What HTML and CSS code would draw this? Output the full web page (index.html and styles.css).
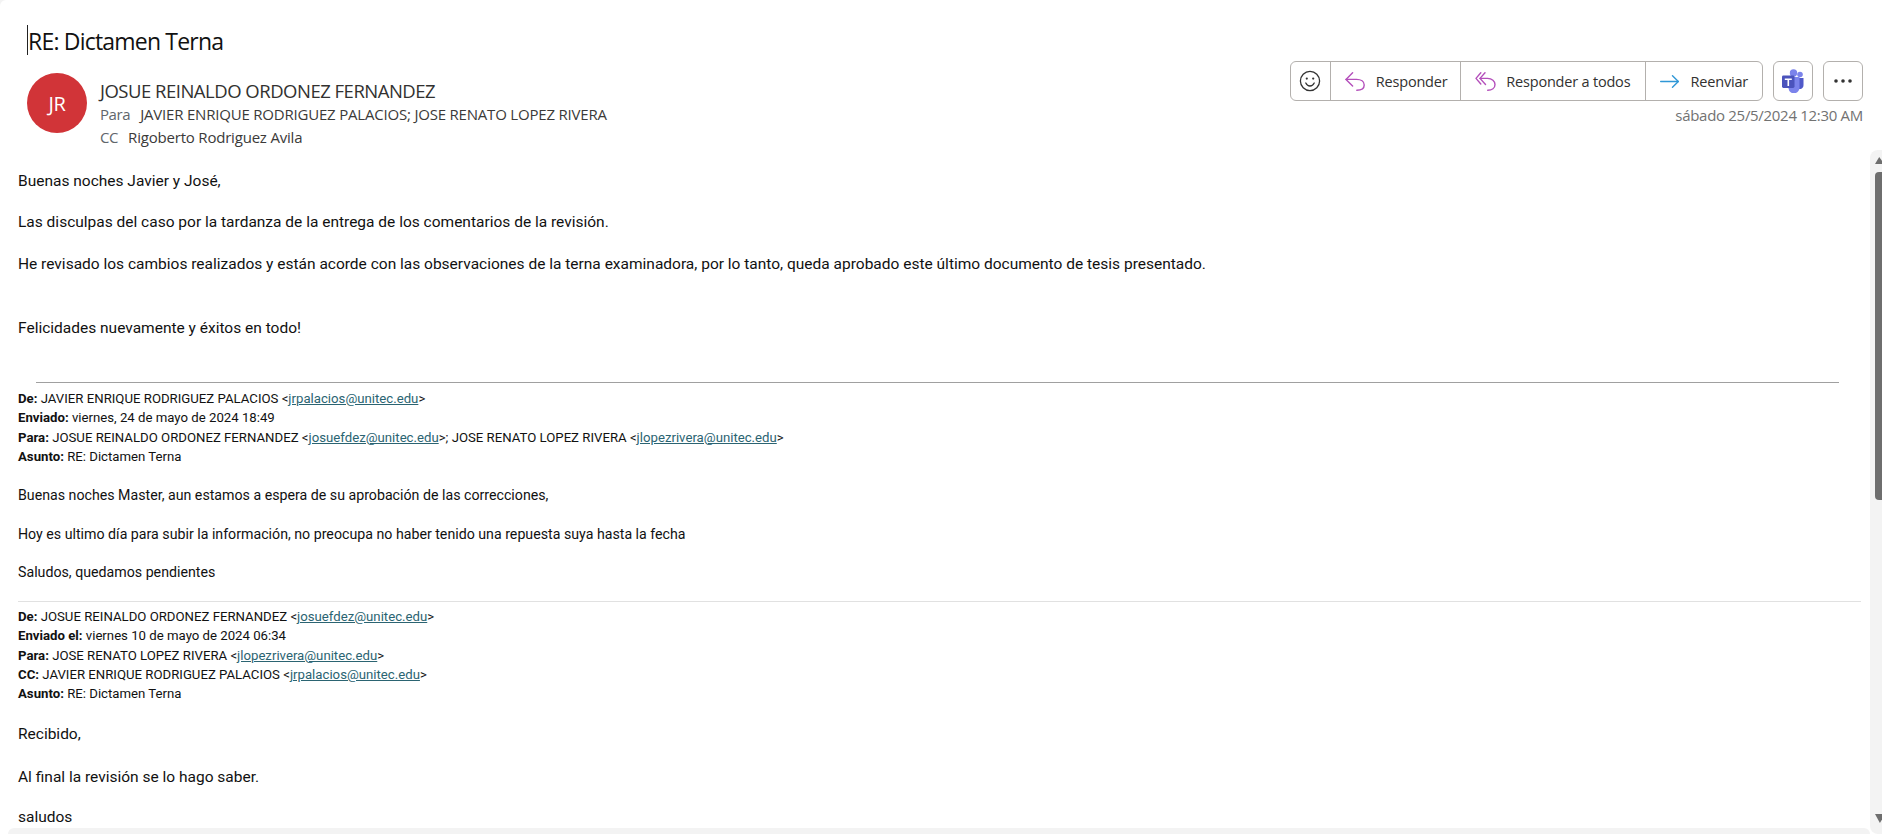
FILE: index.html
```html
<!DOCTYPE html>
<html lang="es">
<head>
<meta charset="utf-8">
<title>RE: Dictamen Terna</title>
<link rel="stylesheet" href="styles.css">
</head>
<body>
<div class="app">
  <header class="head">
    <h1 class="subject"><span class="caret"></span>RE: Dictamen Terna</h1>
    <div class="meta">
      <div class="people">
        <div class="avatar">JR</div>
        <div class="who">
          <div class="sender">JOSUE REINALDO ORDONEZ FERNANDEZ</div>
          <div class="rcpt"><span class="lbl lbl-para">Para</span>JAVIER ENRIQUE RODRIGUEZ PALACIOS; JOSE RENATO LOPEZ RIVERA</div>
          <div class="rcpt"><span class="lbl lbl-cc">CC</span>Rigoberto Rodriguez Avila</div>
        </div>
      </div>
      <div class="actions">
        <div class="btnrow">
          <div class="group">
            <button class="act act-emoji"><svg width="22" height="22" viewBox="0 0 22 22" fill="none" stroke="#333" stroke-width="1.3"><circle cx="11" cy="11" r="9.6"/><path d="M6.8 13c1 2 2.5 3 4.2 3s3.2-1 4.2-3" stroke-linecap="round"/><circle cx="7.8" cy="8.6" r="1.1" fill="#333" stroke="none"/><circle cx="14.2" cy="8.6" r="1.1" fill="#333" stroke="none"/></svg></button>
            <button class="act act-reply"><svg width="20" height="19" viewBox="0 0 20 19" fill="none" stroke="#b44fbb" stroke-width="1.4" stroke-linecap="round" stroke-linejoin="round"><path d="M7.6.8 1 7.4l6.600 6.600"/><path d="M1 7.400h10.500c4.500 0 7.700 2.200 7.700 5.600s-3.200 5.200-7.400 5.200"/></svg><span>Responder</span></button>
            <button class="act act-all"><svg width="21" height="19" viewBox="0 0 21 19" fill="none" stroke="#b44fbb" stroke-width="1.4" stroke-linecap="round" stroke-linejoin="round"><path d="M5.800.8 1 6.400l4.800 5.600"/><path d="M10 .8 5 6.400 10.500 12.500"/><path d="M5 6.400h7.500c4.500 0 7.500 2.700 7.500 6.100s-3 5.700-7.300 5.700"/></svg><span>Responder a todos</span></button>
            <button class="act act-fwd"><svg width="19" height="13" viewBox="0 0 19 13" fill="none" stroke="#2f97d6" stroke-width="1.4" stroke-linecap="round" stroke-linejoin="round"><path d="M.7 6.500h17.600"/><path d="M12.500.8l5.800 5.700-5.800 5.700"/></svg><span>Reenviar</span></button>
          </div>
          <button class="solo solo-teams"><svg width="24" height="24" viewBox="0 0 24 24"><circle cx="19" cy="5.5" r="2.8" fill="#7b83eb"/><path d="M15 9h7.500v7a4 4 0 0 1-7.500 2z" fill="#5059c9"/><circle cx="12.500" cy="4" r="3.700" fill="#7b83eb"/><path d="M6 8h12.500v10a5.500 5.500 0 0 1-11 1.500z" fill="#7b83eb"/><rect x="1" y="6.500" width="12.500" height="12.500" rx="1.400" fill="#4b53bc"/><path d="M3.800 9.500h7v1.400H8.100v6H6.500v-6H3.800z" fill="#fff"/></svg></button>
          <button class="solo solo-more"><svg width="20" height="6" viewBox="0 0 20 6" fill="#333"><circle cx="3" cy="3" r="1.800"/><circle cx="10" cy="3" r="1.800"/><circle cx="17" cy="3" r="1.800"/></svg></button>
        </div>
        <div class="date">sábado 25/5/2024 12:30 AM</div>
      </div>
    </div>
  </header>
  <div class="pane">
    <div class="col">
      <main class="mail">
        <p class="p p-a">Buenas noches Javier y José,</p>
        <p class="p p-b">Las disculpas del caso por la tardanza de la entrega de los comentarios de la revisión.</p>
        <p class="p p-c">He revisado los cambios realizados y están acorde con las observaciones de la terna examinadora, por lo tanto, queda aprobado este último documento de tesis presentado.</p>
        <p class="p p-d">Felicidades nuevamente y éxitos en todo!</p>
        <hr class="rule rule-a">
        <div class="quote">
          <div><b>De:</b> JAVIER ENRIQUE RODRIGUEZ PALACIOS &lt;<a href="#">jrpalacios@unitec.edu</a>&gt;</div>
          <div><b>Enviado:</b> viernes, 24 de mayo de 2024 18:49</div>
          <div><b>Para:</b> JOSUE REINALDO ORDONEZ FERNANDEZ &lt;<a href="#">josuefdez@unitec.edu</a>&gt;; JOSE RENATO LOPEZ RIVERA &lt;<a href="#">jlopezrivera@unitec.edu</a>&gt;</div>
          <div><b>Asunto:</b> RE: Dictamen Terna</div>
        </div>
        <p class="q q-a">Buenas noches Master, aun estamos a espera de su aprobación de las correcciones,</p>
        <p class="q q-b">Hoy es ultimo día para subir la información, no preocupa no haber tenido una repuesta suya hasta la fecha</p>
        <p class="q q-b">Saludos, quedamos pendientes</p>
        <hr class="rule rule-b">
        <div class="quote">
          <div><b>De:</b> JOSUE REINALDO ORDONEZ FERNANDEZ &lt;<a href="#">josuefdez@unitec.edu</a>&gt;</div>
          <div><b>Enviado el:</b> viernes 10 de mayo de 2024 06:34</div>
          <div><b>Para:</b> JOSE RENATO LOPEZ RIVERA &lt;<a href="#">jlopezrivera@unitec.edu</a>&gt;</div>
          <div><b>CC:</b> JAVIER ENRIQUE RODRIGUEZ PALACIOS &lt;<a href="#">jrpalacios@unitec.edu</a>&gt;</div>
          <div><b>Asunto:</b> RE: Dictamen Terna</div>
        </div>
        <p class="p p-e">Recibido,</p>
        <p class="p p-f">Al final la revisión se lo hago saber.</p>
        <p class="p p-g">saludos</p>
      </main>
      <div class="hbar"></div>
    </div>
    <div class="vbar">
      <span class="arrow arrow-up"></span>
      <span class="thumb"></span>
      <span class="arrow arrow-down"></span>
    </div>
  </div>
</div>
</body>
</html>
```
FILE: styles.css
```css
* { box-sizing: border-box; }
html, body { margin: 0; height: 100%; overflow: hidden; background: #f3f3f3; }
body { font-family: "Open Sans", sans-serif; color: #1a1a1a; }
.app { width: 1882px; height: 834px; display: flex; flex-direction: column; overflow: hidden; background: #fff; border-top-left-radius: 6px; }

.head { height: 150px; flex: none; padding: 25px 19px 0 27px; }
.subject { margin: 0; height: 30px; padding-top: 2px; display: flex; align-items: center; font-size: 23px; line-height: 28px; font-weight: 400; color: #111; letter-spacing: -0.8px; }
.caret { width: 1px; height: 30px; background: #222; margin-top: -2px; }
.meta { display: flex; justify-content: space-between; align-items: flex-start; margin-top: -4px; }
.people { display: flex; margin-top: 22px; }
.avatar { width: 60px; height: 60px; border-radius: 50%; background: #d13438; color: #fff; display: flex; align-items: center; justify-content: center; font-size: 20px; letter-spacing: -0.4px; }
.who { margin-left: 13px; padding-top: 6px; color: #3b3a39; }
.sender { font-size: 18.5px; line-height: 24px; letter-spacing: -0.5px; color: #323130; }
.rcpt { font-size: 15px; line-height: 23px; letter-spacing: -0.2px; }
.lbl { color: #61666b; letter-spacing: -0.4px; }
.lbl-para { margin-right: 10px; }
.lbl-cc { margin-right: 10px; }

.actions { display: flex; flex-direction: column; align-items: flex-end; padding-top: 10px; }
.btnrow { display: flex; }
.group { display: flex; width: 473px; height: 40px; border: 1.5px solid #b3b0ad; border-radius: 6px; background: #fff; }
button { font: inherit; color: #323130; background: #fff; padding: 0; display: flex; align-items: center; border: 0; }
.act { border-right: 1.5px solid #b3b0ad; height: 100%; font-size: 14.5px; letter-spacing: -0.2px; background: transparent; }
.act:last-child { border-right: 0; }
.act-emoji { width: 40px; justify-content: center; }
.act-reply { width: 131px; padding-left: 14px; gap: 11px; }
.act-all { width: 185px; padding-left: 14px; gap: 10px; }
.act-fwd { flex: 1; padding: 0 14px; gap: 12px; }
.solo { width: 40px; height: 40px; border: 1.5px solid #b3b0ad; border-radius: 6px; justify-content: center; }
.solo-teams { margin-left: 10px; }
.solo-more { margin-left: 10px; }
.date { font-size: 15px; line-height: 20px; margin-top: 4px; color: #727272; letter-spacing: -0.3px; }

.pane { flex: 1; min-height: 0; display: flex; }
.col { flex: 1; min-width: 0; display: flex; flex-direction: column; }
.mail { flex: 1; min-height: 0; padding: 20px 9px 0 18px; overflow: hidden; font-family: "Roboto", sans-serif; color: #111; }
.p { margin: 0; font-size: 15.5px; line-height: 22px; }
.p-b { margin-top: 19px; }
.p-c { margin-top: 19.5px; }
.p-d { margin-top: 42px; }
.p-e { margin-top: 19.5px; }
.p-f { margin-top: 21px; }
.p-g { margin-top: 18px; }
.rule { margin: 0; border: 0; height: 1px; }
.rule-a { background: #a0a0a0; margin: 43.5px 22px 0 18px; }
.rule-b { background: #e1e1e1; margin: 19px 0 -1px 0; }
.quote { margin-top: 6px; font-size: 13.2px; line-height: 19.3px; }
.quote b { font-weight: 700; }
.quote a { color: #2b6472; }
.q { margin: 0; font-size: 14.2px; line-height: 20px; }
.q-a { margin-top: 19px; }
.q-b { margin-top: 18.5px; }

.vbar { flex: none; width: 12px; background: #f3f3f3; border-radius: 8px 0 0 8px; display: flex; flex-direction: column; align-items: flex-end; padding-top: 7px; }
.arrow { width: 7px; background: #6e6e6e; flex: none; }
.arrow-up { height: 7px; clip-path: polygon(60% 0, 100% 55%, 100% 100%, 0 100%); }
.arrow-down { height: 9px; clip-path: polygon(0 0, 100% 0, 100% 60%, 70% 100%); margin-top: auto; margin-bottom: 11px; }
.thumb { width: 7px; height: 328px; background: #6e6e6e; border-radius: 4px 0 0 4px; margin-top: 8px; flex: none; }
.hbar { flex: none; height: 6px; margin-left: 8px; background: #f3f3f3; border-radius: 6px 6px 0 0; }
```
